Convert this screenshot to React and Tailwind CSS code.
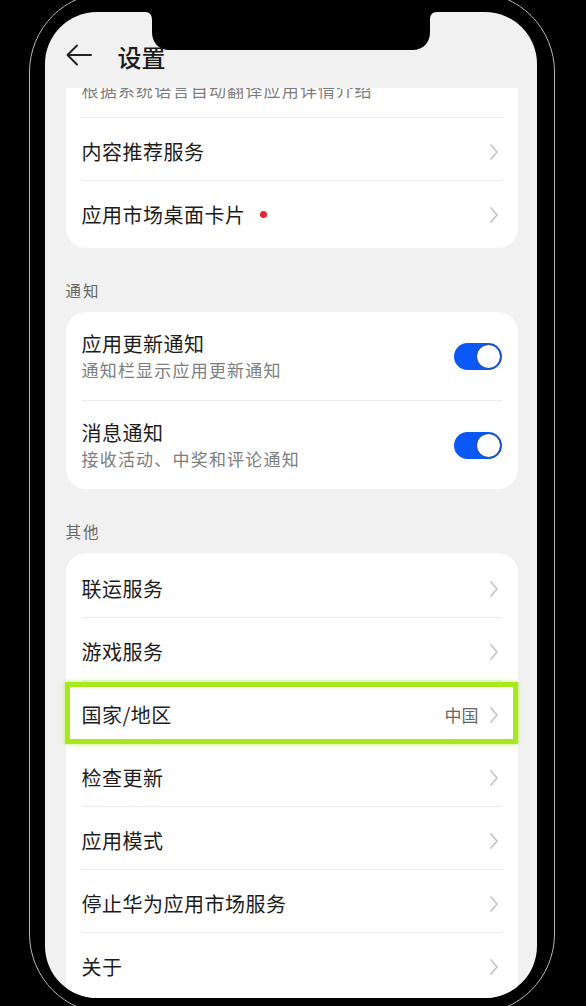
import React from 'react'

const font = { fontFamily: '"Noto Sans CJK SC", "Noto Sans", sans-serif' }

function Chevron() {
  return (
    <svg width="10" height="18" viewBox="0 0 10 18" className="shrink-0">
      <path d="M2 2 L8 9 L2 16" fill="none" stroke="#c6c6c6" strokeWidth="1.8" strokeLinecap="round" strokeLinejoin="round" />
    </svg>
  )
}

function Toggle() {
  return (
    <div className="flex h-[27px] w-[48px] shrink-0 items-center justify-end rounded-full bg-[#0a59f7] pr-[1px]">
      <div className="h-[25px] w-[25px] rounded-full border-[1.5px] border-[#0d3a8f] bg-white" />
    </div>
  )
}

function Divider() {
  return <div className="mx-4 h-px bg-[#ececec]" />
}

function LinkRow({ title, value, dot, highlight }) {
  return (
    <div className="relative flex h-[62px] items-center pl-4 pr-[19px] pt-[6px]">
      <span className="text-[20px] leading-[26px] tracking-[0.5px] text-[#1c1c1c]">{title}</span>
      {dot && <span className="ml-[14px] h-[7px] w-[7px] rounded-full bg-[#e32636]" />}
      <div className="ml-auto flex items-center gap-[10px]">
        {value && <span className="text-[17px] leading-[24px] text-[#666666]">{value}</span>}
        <Chevron />
      </div>
      {highlight && (
        <div className="pointer-events-none absolute -left-[1px] right-0 top-[1px] -bottom-[1px] border-[5px] border-[#a6ea1e] shadow-[0_0_4px_#b8f252]" />
      )}
    </div>
  )
}

function ToggleRow({ title, sub }) {
  return (
    <div className="flex h-[88px] items-center px-4 pt-[2px]">
      <div className="flex flex-col">
        <span className="text-[20px] leading-[26px] tracking-[0.5px] text-[#1c1c1c]">{title}</span>
        <span className="text-[17px] leading-[26px] tracking-[1.2px] text-[#7d7d7d]">{sub}</span>
      </div>
      <div className="ml-auto">
        <Toggle />
      </div>
    </div>
  )
}

function SectionLabel({ children }) {
  return (
    <div className="pl-[21px] pt-[30px] pb-[10px] text-[15.5px] leading-[24px] tracking-[2px] text-[#666666]">{children}</div>
  )
}

const others = ['联运服务', '游戏服务', '国家/地区', '检查更新', '应用模式', '停止华为应用市场服务', '关于']

export default function App() {
  return (
    <div className="relative h-[1006px] w-[586px] overflow-hidden bg-black" style={font}>
      <div className="ml-[29px] -mt-[8px] h-[1022px] w-[526px] rounded-[80px] border-[1.5px] border-[#b8b8b8] pl-[14.5px] pt-[18.5px]">
        <div className="relative h-[986px] w-[492px] overflow-hidden rounded-[52px] bg-[#f1f1f1]">
          {/* notch */}
          <svg width="292" height="38" viewBox="0 0 292 38" className="absolute left-[100px] top-0 z-10">
            <path d="M0 0 C5 0 7 3 7 8 V20 C7 30 13 38 25 38 H267 C279 38 285 30 285 20 V8 C285 3 287 0 292 0 Z" fill="#000" />
          </svg>

          {/* header */}
          <div className="flex h-[76px] items-start pl-[20px] pt-[31px]">
            <svg width="28" height="24" viewBox="0 0 28 24" className="shrink-0">
              <path d="M26 12 H3 M12 2.5 L2.5 12 L12 21.5" fill="none" stroke="#222" strokeWidth="2" strokeLinecap="round" strokeLinejoin="round" />
            </svg>
            <span className="ml-[25px] mt-[1px] text-[24px] font-medium leading-[26px] text-[#1a1a1a]">设置</span>
          </div>

          {/* card 1 (scrolled under the header) */}
          <div className="ml-[21px] w-[452px] overflow-hidden rounded-b-[20px] bg-white pb-[5px]">
            <div className="h-[29px] overflow-hidden pl-4">
              <div className="-mt-[11px] text-[17px] leading-[25px] tracking-[1.2px] text-[#7d7d7d]">根据系统语言自动翻译应用详情介绍</div>
            </div>
            <Divider />
            <LinkRow title="内容推荐服务" />
            <Divider />
            <LinkRow title="应用市场桌面卡片" dot />
          </div>

          <SectionLabel>通知</SectionLabel>
          <div className="ml-[21px] w-[452px] rounded-[20px] bg-white">
            <ToggleRow title="应用更新通知" sub="通知栏显示应用更新通知" />
            <Divider />
            <ToggleRow title="消息通知" sub="接收活动、中奖和评论通知" />
          </div>

          <SectionLabel>其他</SectionLabel>
          <div className="ml-[21px] w-[452px] rounded-[20px] bg-white pt-[2px] pb-[20px]">
            {others.map((t, i) => (
              <React.Fragment key={t}>
                {i > 0 && <Divider />}
                <LinkRow title={t} value={t === '国家/地区' ? '中国' : null} highlight={t === '国家/地区'} />
              </React.Fragment>
            ))}
          </div>
        </div>
      </div>
    </div>
  )
}
